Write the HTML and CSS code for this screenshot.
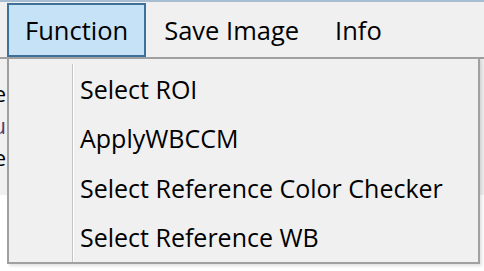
FILE: index.html
```html
<!DOCTYPE html>
<html>
<head>
    <title>Color Calibration</title>
    <link rel="stylesheet" href="styles.css">
</head>
<body>
    <div class="window">
        <div class="topline"></div>

        <nav class="menubar">
            <div class="menu-item open">Function</div>
            <div class="menu-item">Save Image</div>
            <div class="menu-item">Info</div>
        </nav>

        <!-- window contents, mostly hidden behind the open menu -->
        <div class="client">
            <div class="labels">
                <span class="label">Image</span>
                <span class="label tinted">Menu</span>
                <span class="label">Size</span>
            </div>
        </div>

        <div class="dropdown">
            <ul class="items">
                <li>Select ROI</li>
                <li>ApplyWBCCM</li>
                <li>Select Reference Color Checker</li>
                <li>Select Reference WB</li>
            </ul>
        </div>
    </div>
</body>
</html>
```

FILE: styles.css
```css
body {
    margin: 0;
    width: 484px;
    height: 271px;
    overflow: hidden;
    background: #fff;
    font-family: "Open Sans", "Noto Sans", sans-serif;
    color: #000;
}
.window {
    position: relative;
    height: 271px;
}
.topline {
    height: 2px;
    background: #a7bdd2;
}
.menubar {
    display: flex;
    height: 55px;
    padding-left: 7px;
    background: #f0f0f0;
    border-bottom: 2px solid #a0a0a0;
}
.menu-item {
    display: flex;
    align-items: center;
    box-sizing: border-box;
    height: 54px;
    margin-top: 1px;
    padding: 0 16px;
    border: 2px solid transparent;
    font-size: 25.5px;
}
.menu-item.open {
    background: #c6e2f7;
    border-color: #3f7099;
}
.client {
    height: 136px;
    background: #f0f0f0;
}
.labels {
    width: 6px;
    overflow: hidden;
    display: flex;
    flex-direction: column;
    align-items: flex-end;
    padding-top: 18px;
    font-size: 22px;
    line-height: 32px;
}
.label {
    white-space: nowrap;
}
.label.tinted {
    color: #5a3a6a;
}
.dropdown {
    position: absolute;
    left: 7px;
    top: 57px;
    width: 473px;
    box-sizing: border-box;
    border: 2px solid #a0a0a0;
    background: #f0f0f0;
    padding-top: 5px;
    box-shadow: 2px 2px 3px rgba(0,0,0,0.12);
}
.items {
    list-style: none;
    margin: 0;
    padding: 0;
    background: linear-gradient(to right, transparent 63px, #c4c4c4 63px, #c4c4c4 64px, #fff 64px, #fff 65px, transparent 65px);
}
.items li {
    display: flex;
    align-items: center;
    height: 49.5px;
    padding-left: 71px;
    font-size: 25px;
}
```
